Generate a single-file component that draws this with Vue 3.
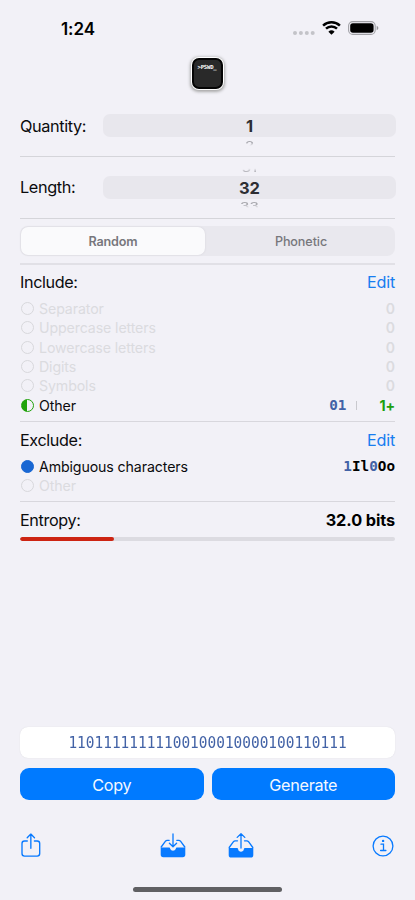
<script setup>
import { ref } from 'vue'

const mode = ref('Random')
const included = [
  { label: 'Separator', count: '0' },
  { label: 'Uppercase letters', count: '0' },
  { label: 'Lowercase letters', count: '0' },
  { label: 'Digits', count: '0' },
  { label: 'Symbols', count: '0' },
]
const entropyPercent = 25
const ambiguous = [
  { text: '1', digit: true },
  { text: 'Il', digit: false },
  { text: '0', digit: true },
  { text: 'Oo', digit: false },
]
const password = '11011111111100100010000100110111'
</script>

<template>
  <main class="screen">
    <header class="status">
      <span class="time">1:24</span>
      <div class="indicators">
        <svg class="dots" width="22" height="4" viewBox="0 0 22 4"><g fill="#c3c3c8"><circle cx="2" cy="2" r="2"/><circle cx="7.9" cy="2" r="2"/><circle cx="13.8" cy="2" r="2"/><circle cx="19.7" cy="2" r="2"/></g></svg>
        <svg class="wifi" width="19" height="14" viewBox="0 0 19 14"><path d="M1.1 4.6C5.7.2 13.3.2 17.9 4.6M4 7.7C7.1 4.8 11.9 4.8 15 7.7" fill="none" stroke="#000" stroke-width="2.5"/><path d="M9.5 13.8 6.4 10.7Q9.5 8 12.6 10.7Z"/></svg>
        <svg class="battery" width="31" height="14" viewBox="0 0 31 14"><rect x=".6" y=".6" width="26.6" height="12.8" rx="4.2" fill="none" stroke="#a1a1a6" stroke-width="1.1"/><rect x="2.2" y="2.2" width="23.4" height="9.6" rx="2.7"/><path d="M28.7 4.8Q30.4 5.5 30.4 7T28.7 9.2Z" fill="#97979b"/></svg>
      </div>
    </header>

    <div class="brand"><div class="app-icon"><span>&gt;PSWD_</span></div></div>

    <section class="picker-row quantity">
      <label>Quantity:</label>
      <div class="wheel">
        <div class="peek previous"></div>
        <div class="selected">1</div>
        <div class="peek next"><span>2</span></div>
      </div>
    </section>
    <section class="picker-row length">
      <label>Length:</label>
      <div class="wheel">
        <div class="peek previous"><span>31</span></div>
        <div class="selected">32</div>
        <div class="peek next"><span>33</span></div>
      </div>
    </section>

    <section class="mode-section">
      <div class="segments">
        <button v-for="m in ['Random', 'Phonetic']" :key="m" :class="{ active: mode === m }" @click="mode = m">{{ m }}</button>
      </div>
    </section>

    <section class="include">
      <div class="heading"><h2>Include:</h2><a>Edit</a></div>
      <div v-for="item in included" :key="item.label" class="item muted">
        <i class="ring"></i><span class="name">{{ item.label }}</span><b class="count">{{ item.count }}</b>
      </div>
      <div class="item">
        <i class="ring half"></i><span class="name other">Other</span><b class="mono digit">01</b><i class="bar"></i><b class="plus">1+</b>
      </div>
    </section>

    <section class="exclude">
      <div class="heading"><h2>Exclude:</h2><a>Edit</a></div>
      <div class="item">
        <i class="ring full"></i><span class="name">Ambiguous characters</span>
        <b class="mono"><span v-for="part in ambiguous" :key="part.text" :class="{ digit: part.digit }">{{ part.text }}</span></b>
      </div>
      <div class="item muted"><i class="ring"></i><span class="name other">Other</span></div>
    </section>

    <section class="entropy">
      <div class="entropy-label"><h2>Entropy:</h2><strong>32.0 bits</strong></div>
      <div class="meter"><div class="fill" :style="{ width: entropyPercent + '%' }"></div></div>
    </section>

    <div class="result"><span>{{ password }}</span></div>
    <div class="actions"><button>Copy</button><button>Generate</button></div>

    <nav class="toolbar">
      <svg class="share" width="20" height="25" viewBox="0 0 20 25" fill="none" stroke="#087aff" stroke-width="1.35" stroke-linecap="round" stroke-linejoin="round"><path d="M6.3 8H3.5Q1 8 1 10.5V20.6Q1 23.1 3.5 23.1H16.2Q18.7 23.1 18.7 20.6V10.5Q18.7 8 16.2 8H13.4M9.85 15.2V1.2M6.2 4.7 9.85 1.1l3.65 3.6"/></svg>
      <svg class="tray in" width="26" height="25" viewBox="0 0 26 25" fill="none" stroke="#087aff" stroke-width="1.3" stroke-linecap="round" stroke-linejoin="round"><path d="M9.2 7.3H7.2Q6.2 7.3 5.5 8.2L1.2 14M16.8 7.3h2q1 0 1.7.9l4.3 5.8M13 1v12.6M9.4 10.2 13 13.8l3.6-3.6"/><path d="M.7 14.6H8.8C9.7 14.6 10 15.1 10.2 15.8 11.1 18.4 14.9 18.4 15.8 15.8 16 15.1 16.3 14.6 17.2 14.6H25.3V21.6Q25.3 24.2 22.7 24.2H3.3Q.7 24.2.7 21.6Z" fill="#087aff" stroke="none"/></svg>
      <svg class="tray out" width="26" height="25" viewBox="0 0 26 25" fill="none" stroke="#087aff" stroke-width="1.3" stroke-linecap="round" stroke-linejoin="round"><path d="M9.5 7.8H7.2Q6.2 7.8 5.5 8.7L1.2 14.5M16.5 7.8h2.3q1 0 1.7.9l4.3 5.8M13 15V1M9.2 4.4 13 .8l3.8 3.6"/><path d="M.7 15H9Q10 15 10.1 16.1C10.3 19.7 15.7 19.7 15.9 16.1Q16 15 17 15H25.3V21.9Q25.3 24.5 22.7 24.5H3.3Q.7 24.5.7 21.9Z" fill="#087aff" stroke="none"/></svg>
      <svg class="info" width="22" height="22" viewBox="0 0 22 22" fill="none" stroke="#087aff" stroke-width="1.3" stroke-linecap="round"><circle cx="11" cy="11" r="9.9"/><path d="M9 9.2h2.5v6.2M8.6 15.5h5.3"/><circle cx="11.1" cy="5.9" r="1.2" fill="#087aff" stroke="none"/></svg>
    </nav>
    <div class="home"></div>
  </main>
</template>

<style>
body { background: #f2f1f7; }
</style>

<style scoped>
* { box-sizing: border-box; }
.screen { width: 415px; height: 900px; padding: 0 20px; background: #f2f1f7; font-family: Inter, "Noto Sans", sans-serif; color: #0b0b0d; display: flex; flex-direction: column; overflow: hidden; }
.status { flex: none; height: 58px; display: flex; justify-content: space-between; }
.time { padding: 18px 0 0 41px; font-size: 17px; font-weight: 600; line-height: 22px; letter-spacing: -.1px; color: #000; }
.indicators { display: flex; padding: 21px 16.5px 0 0; }
.dots { margin: 10px 6.5px 0 0; }
.wifi { margin-right: 7px; }
.brand { flex: none; height: 47px; display: flex; justify-content: center; align-items: flex-start; }
.app-icon { width: 31px; height: 31px; border: 2px solid #050505; border-radius: 7px; background: #292929; box-shadow: 0 0 0 1px #fff, 0 1px 3px 1.5px #aaa; color: #fff; font: bold 5.6px/6px "DejaVu Sans Mono", monospace; padding: 4px 0 0 3.5px; letter-spacing: -.2px; }
.app-icon span { display: block; }
.picker-row { flex: none; height: 62px; display: flex; align-items: flex-start; border-bottom: 1px solid #d5d5da; }
.quantity { height: 52px; }
.picker-row label { width: 83px; flex: none; font-size: 16.3px; line-height: 20px; letter-spacing: -.38px; padding-top: 20px; }
.quantity label { padding-top: 10.5px; }
.wheel { width: 293px; flex: none; display: flex; flex-direction: column; align-items: center; padding-top: 9.5px; }
.quantity .wheel { padding-top: 0; }
.selected { width: 293px; height: 23px; border-radius: 7px; background: #e8e7ed; text-align: center; font-size: 16.5px; line-height: 24px; font-weight: 650; color: #2d2e33; }
.peek { height: 9px; overflow: hidden; color: #a9a9af; font-size: 15px; font-weight: 500; line-height: 16px; }
.peek span { display: block; transform: scaleY(.7); }
.next { padding-top: 2.5px; -webkit-mask-image: linear-gradient(#000 60%, transparent 98%); mask-image: linear-gradient(#000 60%, transparent 98%); }
.next span { transform-origin: top; }
.previous { -webkit-mask-image: linear-gradient(transparent 15%, #000 60%); mask-image: linear-gradient(transparent 15%, #000 60%); }
.previous span { transform-origin: bottom; margin-top: -9px; }
.mode-section { flex: none; height: 46px; padding-top: 7px; border-bottom: 2px solid #e1e0e6; }
.segments { height: 30px; padding: 1px; display: grid; grid-template-columns: 184px 1fr; border-radius: 8px; background: #e9e8ee; }
.segments button { border: 0; border-radius: 7px; background: transparent; font: 500 12.6px Inter, sans-serif; color: #77777c; padding: 0 0 0 3px; letter-spacing: -.1px; }
.segments .active { background: #fafafc; padding: 0; font-weight: 600; letter-spacing: -.15px; box-shadow: 0 0 2px #d2d1d7; }
h2 { margin: 0; font-weight: 400; font-size: 16.2px; line-height: 20px; letter-spacing: -.38px; }
.heading { display: flex; justify-content: space-between; }
.heading a { font-size: 16.2px; line-height: 20px; letter-spacing: -.2px; color: #187df0; }
.include { flex: none; height: 156.5px; padding-top: 7px; border-bottom: 1px solid #d8d7dd; }
.include .heading { height: 27px; }
.exclude .heading { height: 26.5px; }
.item { height: 19.3px; display: flex; align-items: center; font-size: 14.2px; }
.ring { width: 13px; height: 13px; border: 1.2px solid #d8d8dc; border-radius: 50%; margin: 0 5px 0 1px; flex: none; }
.name { flex: 1; letter-spacing: -.12px; }
.muted { color: #dbdbdf; }
.count { font-size: 14px; font-weight: 600; }
.half { border-color: #20a20b; background: linear-gradient(90deg, #20a20b 50%, transparent 50%); }
.full { background: #1967d3; border-color: #1967d3; }
.mono { font: bold 14.3px "DejaVu Sans Mono", monospace; color: #000; }
.mono.digit, .digit { color: #4262a6; }
.bar { width: 1px; height: 9px; background: #c9c9ce; margin: 0 22px 0 10px; }
.plus { color: #209f0d; font-weight: 700; letter-spacing: -.1px; }
.exclude { flex: none; height: 80.3px; padding-top: 8.5px; border-bottom: 1px solid #d8d7dd; }
.entropy { flex: none; height: 225.7px; padding-top: 8px; }
.entropy-label { display: flex; justify-content: space-between; height: 27.6px; }
.entropy strong { font-size: 16.3px; line-height: 20px; font-weight: 650; letter-spacing: -.1px; color: #000; }
.meter { height: 4px; border-radius: 2px; overflow: hidden; background: #dcdbe1; }
.fill { height: 100%; border-radius: 2px; background: #cd2412; }
.result { flex: none; height: 31px; border-radius: 8px; background: #fff; box-shadow: 0 0 1px #d0cfd7; font: 14.45px/32px "DejaVu Sans Mono", monospace; color: #4262a6; text-align: center; }
.result span { display: block; transform: scaleY(1.07); }
.actions { flex: none; display: grid; grid-template-columns: 1fr 1fr; gap: 8px; margin-top: 10px; }
.actions button { height: 32px; border: 0; border-radius: 9px; background: #007aff; color: #f4f8ff; font: 400 16.2px Inter, sans-serif; letter-spacing: -.3px; padding: 1px 0 0; }
.toolbar { flex: none; height: 87px; padding: 32.5px 1px 0; display: flex; align-items: flex-start; }
.tray.in { margin-left: 119px; }
.tray.out { margin-left: 42px; }
.info { margin: 2px 0 0 auto; }
.home { flex: none; align-self: center; width: 149px; height: 5px; border-radius: 3px; background: #606063; }
</style>
